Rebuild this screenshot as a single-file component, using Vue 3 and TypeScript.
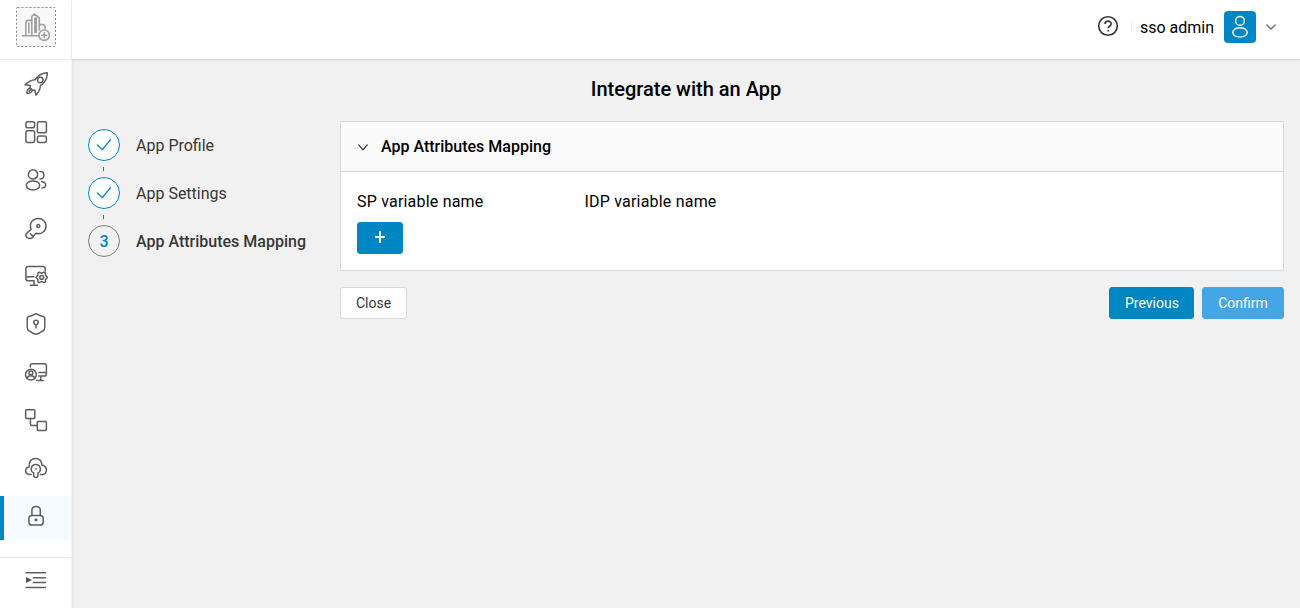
<script setup lang="ts">
import { ref } from 'vue'

interface NavItem {
  id: string
  paths: string[]
  active?: boolean
}

interface Step {
  label: string
  done: boolean
}

const circle = (cx: number, cy: number, rx: number, ry: number = rx): string =>
  `M${cx - rx} ${cy}a${rx} ${ry} 0 1 1 ${rx * 2} 0a${rx} ${ry} 0 1 1 ${-rx * 2} 0z`

const navItems: NavItem[] = [
  {
    id: 'quick-start',
    paths: [
      'M23.3 .8C18.5 .8 14.5 3 11 7.8C7.5 7.9 4.2 9.8 1.1 12.8L6.3 13.5L6 15.7L8.6 18.2L10.9 18.2L11.9 23.1C14.6 20.5 16.1 17.4 16.4 13.7C21 10.5 23.4 6 23.3 .8z',
      circle(16.3, 8, 2.7),
      'M5.8 16.2C3.5 16.7 2.8 18.4 3 21.4C5.8 21.4 7.8 20.3 8.3 18.4M5.1 19.3L7 17.4',
    ],
  },
  {
    id: 'dashboard',
    paths: [
      'M3.7 1.8H8.8Q10.6 1.8 10.6 3.6V5.9Q10.6 7.7 8.8 7.7H3.7Q1.9 7.7 1.9 5.9V3.6Q1.9 1.8 3.7 1.8z',
      'M15.2 1.8H20.6Q22.4 1.8 22.4 3.6V10.9Q22.4 12.7 20.6 12.7H15.2Q13.4 12.7 13.4 10.9V3.6Q13.4 1.8 15.2 1.8z',
      'M3.7 10.8H8.8Q10.6 10.8 10.6 12.6V20.6Q10.6 22.4 8.8 22.4H3.7Q1.9 22.4 1.9 20.6V12.6Q1.9 10.8 3.7 10.8z',
      'M15.2 15.9H20.6Q22.4 15.9 22.4 17.7V20.6Q22.4 22.4 20.6 22.4H15.2Q13.4 22.4 13.4 20.6V17.7Q13.4 15.9 15.2 15.9z',
    ],
  },
  {
    id: 'users',
    paths: [
      circle(9, 6.4, 4.6),
      circle(9, 17.4, 6.7, 4.5),
      'M15.9 3.5C18.4 3.2 20 5 20 7.2S18.4 11.1 15.9 11',
      'M17.7 13.4C20.2 13.9 21.7 15.3 21.7 17S20.4 19.7 18 20',
    ],
  },
  {
    id: 'access',
    paths: [
      'M7.1 13.5C4.8 7.5 8.6 2.4 14.3 2.4C18.8 2.4 22.1 5.9 22.1 10.1C22.1 15.2 17.1 19 11.8 17.3L9.3 20.2C9 21.7 7.7 22.5 5.7 22.4C3.3 22.4 1.9 21.1 1.9 19.4C1.8 18.2 2.2 17.5 3.1 16.9L7.1 13.5zM6.2 17.8L9.2 20.4',
      circle(14.3, 10, 1.5),
    ],
  },
  {
    id: 'devices',
    paths: [
      'M9.2 16.8H4Q1.9 16.8 1.9 14.6V4.7Q1.9 2.5 4.1 2.5H19Q21.2 2.5 21.2 4.7V7M1.9 12.8H9.8M10 16.8V21.2M6.2 21.3H13.6',
      'M15.5 8.1L17.7 9.4L19.9 8.1L21.4 9L21.5 11.3L23.4 13.4L21.5 15.5L21.4 17.8L19.9 18.7L17.7 17.4L15.5 18.7L14 17.8L13.9 15.5L12 13.4L13.9 11.3L14 9z',
      circle(17.7, 13.4, 1.9),
    ],
  },
  {
    id: 'security',
    paths: [
      'M12 1.6Q16 3.9 19.3 4.5Q20.8 4.9 20.8 6.5V15Q20.8 17.7 18.9 18.9Q15.9 21.2 12 22.3Q8.1 21.2 5.1 18.9Q3.2 17.7 3.2 15V6.5Q3.2 4.9 4.7 4.5Q8 3.9 12 1.6z',
      circle(12, 10.4, 2.2),
      'M12 12.7V16',
    ],
  },
  {
    id: 'user-devices',
    paths: [
      'M6.3 7.1V6Q6.3 3.8 8.5 3.8H20.3Q22.4 3.8 22.4 6V13.9Q22.4 16.1 20.3 16.1H14.8M15 12.4H22.2M16.8 16.1V20.2M12.6 20.4H19.2',
      circle(6.9, 14.7, 5.4),
      circle(6.9, 12.9, 1.9),
      'M3.2 18.2C3.5 15.9 5.1 15.7 6.9 15.7S10.3 15.9 10.6 18.2',
    ],
  },
  {
    id: 'provisioning',
    paths: [
      'M2.5 1.8H10Q10.8 1.8 10.8 2.6V9.8Q10.8 10.6 10 10.6H2.5Q1.7 10.6 1.7 9.8V2.6Q1.7 1.8 2.5 1.8z',
      'M14.1 13.4H21.6Q22.4 13.4 22.4 14.2V21.6Q22.4 22.4 21.6 22.4H14.1Q13.3 22.4 13.3 21.6V14.2Q13.3 13.4 14.1 13.4z',
      'M6.4 10.8V15.4Q6.4 17.5 8.5 17.5H13',
    ],
  },
  {
    id: 'cloud-access',
    paths: [
      'M7.2 18.5H6.2C3.5 18.5 1.7 16.9 1.7 14.5C1.7 12.5 3 11.2 5.2 10.9C4.5 6 7.2 2.4 11.3 2.4C15.2 2.4 17.7 5 17.9 8.9C20.7 9.6 22.4 11.4 22.4 14.1C22.4 16.6 20.7 18.5 18.2 18.5H16.3',
      'M9.7 17C5.5 15 7 8.5 11.8 8.5S18.1 15 13.9 17V19.6Q13.9 21.6 11.8 21.6T9.7 19.6z',
      circle(11.8, 12.8, 0.3),
    ],
  },
  {
    id: 'sso',
    active: true,
    paths: [
      'M7.9 11.4V6.5Q7.9 2.5 12.1 2.5T16.3 6.5V11.4',
      'M7.9 11.4H16.2Q19.2 11.4 19.2 14.2V18.2Q19.2 21.1 16.2 21.1H7.9Q4.9 21.1 4.9 18.2V14.2Q4.9 11.4 7.9 11.4z',
      circle(12, 15.9, 0.7),
    ],
  },
]

const steps: Step[] = [
  { label: 'App Profile', done: true },
  { label: 'App Settings', done: true },
  { label: 'App Attributes Mapping', done: false },
]

const expanded = ref(true)
</script>

<template>
  <div class="shell">
    <aside class="sidebar">
      <div class="brand">
        <div class="logo">
          <svg class="dash" viewBox="0 0 40 40"><rect x=".5" y=".5" width="39" height="39" rx="1" /></svg>
          <svg class="buildings" viewBox="0 0 40 40">
            <path d="M6.5 28.8H24M9.8 28V16Q9.8 13.6 12 13.4H15.8M15.8 28V9.5L18.3 7L23.3 10.8V23M23.6 17.6H26.5Q29.2 17.8 29.2 20.5V22M12.8 16V26" />
            <path class="thick" d="M19.6 10.5V26" />
            <circle cx="28.2" cy="28.2" r="5.2" />
            <path d="M25.7 28.2H30.7M28.2 25.7V30.7" />
          </svg>
        </div>
      </div>
      <nav class="nav">
        <a v-for="item in navItems" :key="item.id" class="nav-item" :class="{ active: item.active }">
          <svg viewBox="0 0 24 24"><path v-for="(d, i) in item.paths" :key="i" :d="d" /></svg>
        </a>
      </nav>
      <div class="collapse">
        <svg viewBox="0 0 24 24">
          <path d="M1.5 4.8H22M8.7 9.8H22M8.7 14.4H22M1.5 19.4H22" />
          <path class="solid" d="M2 9V15L8 12z" />
        </svg>
      </div>
    </aside>

    <div class="content">
      <header class="topbar">
        <svg class="help" viewBox="0 0 24 24">
          <circle cx="12" cy="12" r="9.3" />
          <path d="M9 9.9C9 6.2 15.2 6.2 15.2 9.8C15.2 12 12.2 12 12.2 14.2" />
          <path d="M12.2 15.9V17.5" />
        </svg>
        <span class="divider"></span>
        <span class="username">sso admin</span>
        <span class="avatar">
          <svg viewBox="0 0 32 32"><circle cx="16" cy="9.9" r="4.4" /><ellipse cx="16" cy="21.4" rx="7.2" ry="4.7" /></svg>
        </span>
        <svg class="caret" viewBox="0 0 12 8"><path d="M1.8 1.9L6 6.1L10.2 1.9" /></svg>
      </header>

      <main class="main">
        <h1>Integrate with an App</h1>
        <div class="columns">
          <ol class="steps">
            <li v-for="(step, index) in steps" :key="step.label" :class="{ current: !step.done }">
              <span class="marker">
                <svg v-if="step.done" viewBox="0 0 16 16"><path d="M1.5 8L6.2 12.9L14.5 2.6" /></svg>
                <template v-else>{{ index + 1 }}</template>
              </span>
              <span>{{ step.label }}</span>
            </li>
          </ol>

          <div class="work">
            <section class="panel">
              <div class="panel-head" @click="expanded = !expanded">
                <svg viewBox="0 0 12 8"><path d="M1.7 1.9L6 6.9L10.3 1.9" /></svg>
                <h2>App Attributes Mapping</h2>
              </div>
              <div v-if="expanded" class="panel-body">
                <div class="fields"><span>SP variable name</span><span>IDP variable name</span></div>
                <button class="btn primary add" type="button" aria-label="Add">
                  <svg viewBox="0 0 12 12"><path d="M1 6H11M6 0V12" /></svg>
                </button>
              </div>
            </section>
            <div class="actions">
              <button class="btn plain" type="button">Close</button>
              <span class="spacer"></span>
              <button class="btn primary previous" type="button">Previous</button>
              <button class="btn primary muted" type="button">Confirm</button>
            </div>
          </div>
        </div>
      </main>
    </div>
  </div>
</template>

<style>
body {
  margin: 0;
  overflow: hidden;
}
</style>

<style scoped>
.shell {
  display: flex;
  height: 100vh;
  background: #f1f1f1;
  font-family: Roboto, "Liberation Sans", sans-serif;
  font-size: 16px;
  color: #000;
}
* {
  box-sizing: border-box;
}
svg {
  display: block;
  flex: none;
  fill: none;
  stroke-linecap: round;
  stroke-linejoin: round;
}
.sidebar {
  display: flex;
  flex-direction: column;
  width: 72px;
  flex: none;
  background: #fff;
  border-right: 1px solid #f3f3f3;
  box-shadow: 0 1px 3px rgba(0, 0, 0, 0.12);
}
.brand {
  height: 60px;
  padding: 7px 0 0 16px;
  border-bottom: 1px solid #ececec;
}
.logo {
  display: grid;
  width: 40px;
  height: 40px;
  background: #f9f9f9;
}
.logo svg {
  grid-area: 1 / 1;
  width: 40px;
  height: 40px;
}
.dash {
  stroke: #858585;
  stroke-dasharray: 2 2;
  stroke-linecap: butt;
}
.buildings {
  stroke: #a0a0a0;
  stroke-width: 1.6;
}
.buildings circle {
  fill: #f9f9f9;
}
.buildings .thick {
  stroke-width: 3;
  stroke-linecap: butt;
}
.nav {
  display: flex;
  flex-direction: column;
  gap: 4px;
  padding-top: 4px;
}
.nav-item {
  height: 44px;
  padding: 8px 0 0 20px;
  border-left: 4px solid transparent;
}
.nav-item.active {
  background: #f5fbff;
  border-color: #0086c3;
}
.nav-item svg {
  width: 24px;
  height: 24px;
  stroke: #5c5e61;
  stroke-width: 1.5;
}
.collapse {
  margin-top: auto;
  height: 51px;
  border-top: 1px solid #e9e9e9;
  padding: 10px 0 0 24px;
}
.collapse svg {
  width: 24px;
  height: 24px;
  stroke: #606060;
  stroke-width: 1.5;
  stroke-linecap: butt;
}
.solid {
  fill: #555;
  stroke: none;
}
.content {
  flex: 1;
  min-width: 0;
}
.topbar {
  display: flex;
  align-items: center;
  height: 59px;
  padding: 0 23px 5px 0;
  justify-content: flex-end;
  background: #fff;
  box-shadow: 0 1px 2px rgba(0, 0, 0, 0.14);
}
.help {
  width: 24px;
  height: 24px;
  margin-top: -2px;
  stroke: #333;
  stroke-width: 1.6;
  stroke-linecap: butt;
}
.divider {
  width: 1px;
  height: 12px;
  margin: 0 8px 0 11px;
  background: #f0f0f0;
}
.username {
  padding-top: 2px;
  line-height: 24px;
}
.avatar {
  width: 32px;
  height: 32px;
  margin-left: 10px;
  border-radius: 4px;
  background: #0086c3;
}
.avatar svg {
  width: 32px;
  height: 32px;
  stroke: #fff;
  stroke-width: 1.4;
}
.caret {
  width: 12px;
  height: 8px;
  margin-left: 9px;
  stroke: #707070;
  stroke-width: 1.4;
}
.main {
  padding: 16px;
}
h1 {
  margin: 0 0 18px;
  font-size: 20px;
  font-weight: 500;
  line-height: 28px;
  text-align: center;
}
.columns {
  display: flex;
  align-items: flex-start;
}
.steps {
  width: 252px;
  flex: none;
  margin: 0;
  padding: 8px 0 0;
  list-style: none;
  color: #373737;
}
.steps li {
  display: flex;
  align-items: center;
  gap: 16px;
  height: 32px;
}
.steps li + li {
  margin-top: 16px;
  position: relative;
}
.steps li + li::before {
  content: "";
  position: absolute;
  left: 15px;
  top: -10px;
  width: 1px;
  height: 4px;
  background: #0086c3;
}
.marker {
  display: flex;
  align-items: center;
  justify-content: center;
  width: 32px;
  height: 32px;
  border: 1px solid #0086c3;
  border-radius: 50%;
  background: #fff;
  color: #0086c3;
}
.marker svg {
  width: 16px;
  height: 16px;
  stroke: #0086c3;
  stroke-width: 1.3;
}
.current {
  font-weight: 500;
}
.current .marker {
  border-color: #808080;
  background: transparent;
}
.work {
  flex: 1;
}
.panel {
  border: 1px solid #d9d9d9;
  border-radius: 2px;
  background: #fff;
}
.panel-head {
  display: flex;
  align-items: center;
  height: 50px;
  padding-left: 16px;
  gap: 12px;
  background: #fafafa;
  border-bottom: 1px solid #d9d9d9;
}
.panel-head svg {
  width: 12px;
  height: 8px;
  stroke: #333;
  stroke-width: 1.2;
}
h2 {
  margin: 0;
  font-size: 16px;
  font-weight: 500;
  line-height: 24px;
}
.panel-body {
  height: 98px;
  padding: 17px 16px;
}
.fields {
  display: grid;
  grid-template-columns: 227.5px 1fr;
  line-height: 25px;
  letter-spacing: 0.2px;
  margin-bottom: 8px;
}
.btn {
  height: 32px;
  padding: 0 15px;
  border: 1px solid #d9d9d9;
  border-radius: 3px;
  font: 400 14px/22px Roboto, sans-serif;
}
.btn.primary {
  border-color: #0086c3;
  background: #0086c3;
  color: #fff;
  text-shadow: 0 -1px 0 rgba(0, 0, 0, 0.12);
}
.btn.primary.muted {
  border-color: #45a6e5;
  background: #45a6e5;
  width: 82px;
}
.btn.plain {
  width: 67px;
  background: #fff;
  color: #373737;
}
.btn.primary.previous {
  width: 85px;
}
.add {
  display: flex;
  width: 46px;
  padding: 8px 0 0 16px;
  align-items: flex-start;
}
.add svg {
  width: 12px;
  height: 12px;
  stroke: #fff;
  stroke-width: 2;
  stroke-linecap: butt;
}
.actions {
  display: flex;
  gap: 8px;
  margin-top: 16px;
}
.spacer {
  flex: 1;
}
</style>
